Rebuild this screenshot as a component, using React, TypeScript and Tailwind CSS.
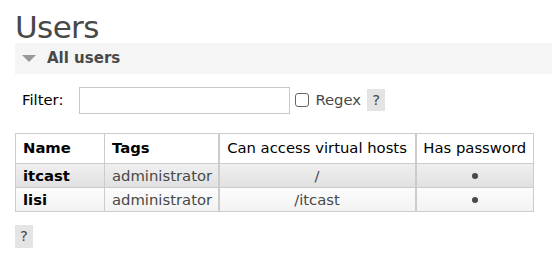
import React from "react";

export default function App() {
  const rows = [
    { name: "itcast", tags: "administrator", vhosts: "/", first: true },
    { name: "lisi", tags: "administrator", vhosts: "/itcast", first: false },
  ];
  return (
    <div
      className="w-[552px] h-[277px] bg-white overflow-hidden text-[#484848]"
      style={{ fontFamily: '"DejaVu Sans", Verdana, sans-serif' }}
    >
      <h1 className="pl-[15px] pt-[9px] h-[43px] text-[31px] leading-[36px] font-normal text-[#484848] tracking-[-0.6px]">
        Users
      </h1>
      <div className="ml-[15px] h-[31px] bg-[#f5f5f5] flex items-center">
        <svg width="14" height="8" viewBox="0 0 14 8" className="ml-[7px]">
          <polygon points="0,0 14,0 7,7" fill="#999" />
        </svg>
        <span className="ml-[11px] text-[15px] font-bold text-[#484848]">All users</span>
      </div>
      <div className="flex items-center h-[49px] pl-[22px] pt-[3px]">
        <span className="text-[14.8px] text-black">Filter:</span>
        <div className="ml-[16px] w-[211px] h-[27px] border border-[#c8c8c8] bg-white" />
        <div className="ml-[5px] w-[14px] h-[14px] border border-[#666] rounded-[3px] bg-white" />
        <span className="ml-[6px] text-[14.8px] text-[#484848]">Regex</span>
        <span className="ml-[6px] w-[18px] h-[22px] bg-[#e4e4e4] text-[14.8px] text-[#484848] flex items-center justify-center">
          ?
        </span>
      </div>
      <div className="pl-[15px] pt-[10px]">
        <table className="border-collapse text-[14.8px]">
          <thead>
            <tr className="h-[30px] bg-white">
              <th className="w-[89px] text-left pl-[7px] font-bold text-black border border-[#ccc]">Name</th>
              <th className="w-[114px] text-left pl-[7px] font-bold text-black border border-[#ccc] border-r-2">Tags</th>
              <th className="w-[197px] text-center font-normal text-black border border-[#ccc] border-r-2">
                Can access virtual hosts
              </th>
              <th className="w-[118px] text-center font-normal text-black border border-[#ccc]">Has password</th>
            </tr>
          </thead>
          <tbody>
            {rows.map((r) => (
              <tr
                key={r.name}
                className={
                  r.first
                    ? "h-[24px] bg-gradient-to-b from-[#f0f0f0] to-[#e0e0e0]"
                    : "h-[24px] bg-gradient-to-b from-[#fcfcfc] to-[#f2f2f2]"
                }
              >
                <td className="pl-[7px] font-bold text-black border border-[#ccc] leading-[20px]">{r.name}</td>
                <td className="pl-[7px] text-[#484848] border border-[#ccc] border-r-2 leading-[20px]">{r.tags}</td>
                <td className="text-center text-[#484848] border border-[#ccc] border-r-2 leading-[20px]">{r.vhosts}</td>
                <td className="border border-[#ccc] leading-[20px]">
                  <div className="flex justify-center">
                    <span className="block w-[6px] h-[6px] rounded-full bg-[#484848]" />
                  </div>
                </td>
              </tr>
            ))}
          </tbody>
        </table>
        <div className="mt-[13px] w-[18px] h-[23px] bg-[#e4e4e4] text-[14.8px] text-[#484848] flex items-center justify-center">
          ?
        </div>
      </div>
    </div>
  );
}
